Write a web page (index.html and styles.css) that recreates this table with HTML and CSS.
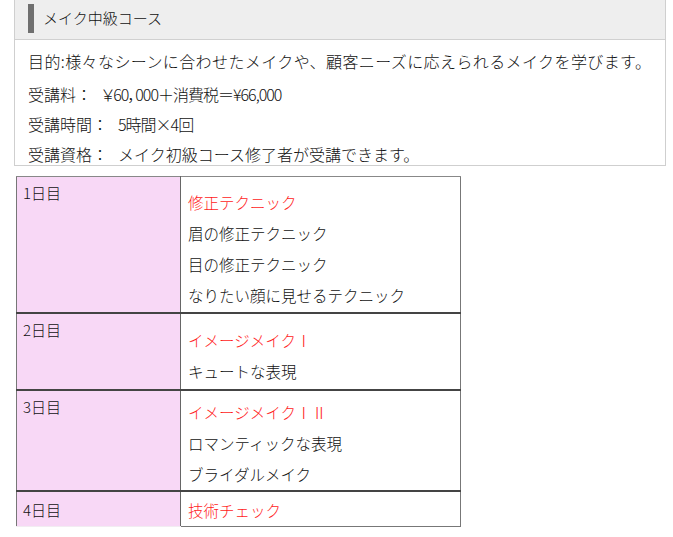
FILE: index.html
```html
<!DOCTYPE html>
<html lang="ja">
<head>
<meta charset="utf-8">
<link rel="stylesheet" href="styles.css">
</head>
<body>
<div class="page">
  <section class="course">
    <div class="course-head">
      <span class="bar"></span>
      <h2 class="title">メイク中級コース</h2>
    </div>
    <div class="course-body">
      <p class="line first">目的:様々なシーンに合わせたメイクや、顧客ニーズに応えられるメイクを学びます。</p>
      <p class="line">受講料：<span class="val narrow">￥60，000＋消費税＝¥66,000</span></p>
      <p class="line">受講時間：<span class="val narrow">5時間×4回</span></p>
      <p class="line">受講資格：<span class="val">メイク初級コース修了者が受講できます。</span></p>
    </div>
  </section>
  <table class="schedule">
    <tr class="r1">
      <th class="day">1日目</th>
      <td class="items">
        <div class="red">修正テクニック</div>
        <div>眉の修正テクニック</div>
        <div>目の修正テクニック</div>
        <div>なりたい顔に見せるテクニック</div>
      </td>
    </tr>
    <tr class="r2">
      <th class="day">2日目</th>
      <td class="items">
        <div class="red">イメージメイクⅠ</div>
        <div>キュートな表現</div>
      </td>
    </tr>
    <tr class="r3">
      <th class="day">3日目</th>
      <td class="items">
        <div class="red">イメージメイクⅠⅡ</div>
        <div>ロマンティックな表現</div>
        <div>ブライダルメイク</div>
      </td>
    </tr>
    <tr class="r4">
      <th class="day">4日目</th>
      <td class="items">
        <div class="red">技術チェック</div>
      </td>
    </tr>
  </table>
</div>
</body>
</html>
```

FILE: styles.css
```css
html, body {
  margin: 0;
  padding: 0;
  background: #fff;
}
body {
  font-family: "Noto Sans CJK JP", "Liberation Sans", sans-serif;
  color: #111;
  font-weight: 300;
}
.page {
  padding: 0 7px 0 14px;
}
.course {
  width: 650px;
  border: 1px solid #cfcfcf;
  border-top: none;
}
.course-head {
  height: 40px;
  background: #eeeeee;
  border-bottom: 1px solid #d0d0d0;
  display: flex;
  align-items: flex-start;
  box-sizing: border-box;
  padding-left: 13px;
}
.bar {
  width: 6px;
  height: 29px;
  margin-top: 4px;
  background: #6f6f6f;
  flex: none;
}
.title {
  margin: 0 0 0 9px;
  font-size: 15px;
  font-weight: 300;
  line-height: 36px;
}
.course-body {
  padding: 10px 0 0 13px;
}
.line {
  margin: 0 0 8px;
  font-size: 16px;
  line-height: 22px;
  white-space: nowrap;
}
.line.first {
  margin-bottom: 11px;
  letter-spacing: 0.4px;
}
.line:last-child {
  margin-bottom: 0;
}
.val {
  margin-left: 10px;
}
.narrow {
  font-feature-settings: "palt";
  letter-spacing: -1px;
}
.schedule {
  margin: 10px 0 0 2px;
  border-collapse: collapse;
  width: 445px;
  border: 1px solid #777;
}
.schedule tr {
  border-top: 2px solid #444;
}
.schedule tr.r1 {
  border-top: 1px solid #888;
}
.day {
  width: 164px;
  box-sizing: border-box;
  background: #f8d8f6;
  border-right: 1px solid #666;
  border-bottom: 1px solid #f2ecf2;
  text-align: left;
  vertical-align: top;
  font-weight: 300;
  font-size: 15px;
  line-height: 31px;
  padding: 0 6px;
}
.items {
  vertical-align: middle;
  padding: 10px 7px 0 7px;
  font-size: 15.5px;
  line-height: 31px;
}
.red {
  color: #ff1a1a;
}
.r1 { height: 136px; }
.r2 { height: 77px; }
.r3 { height: 101px; }
.r3 .items { padding-top: 6px; }
.r4 { height: 33px; }
.r4 .items { padding-top: 3px; line-height: 29px; }
.r4 .day { line-height: 32px; padding-top: 2px; }
```
